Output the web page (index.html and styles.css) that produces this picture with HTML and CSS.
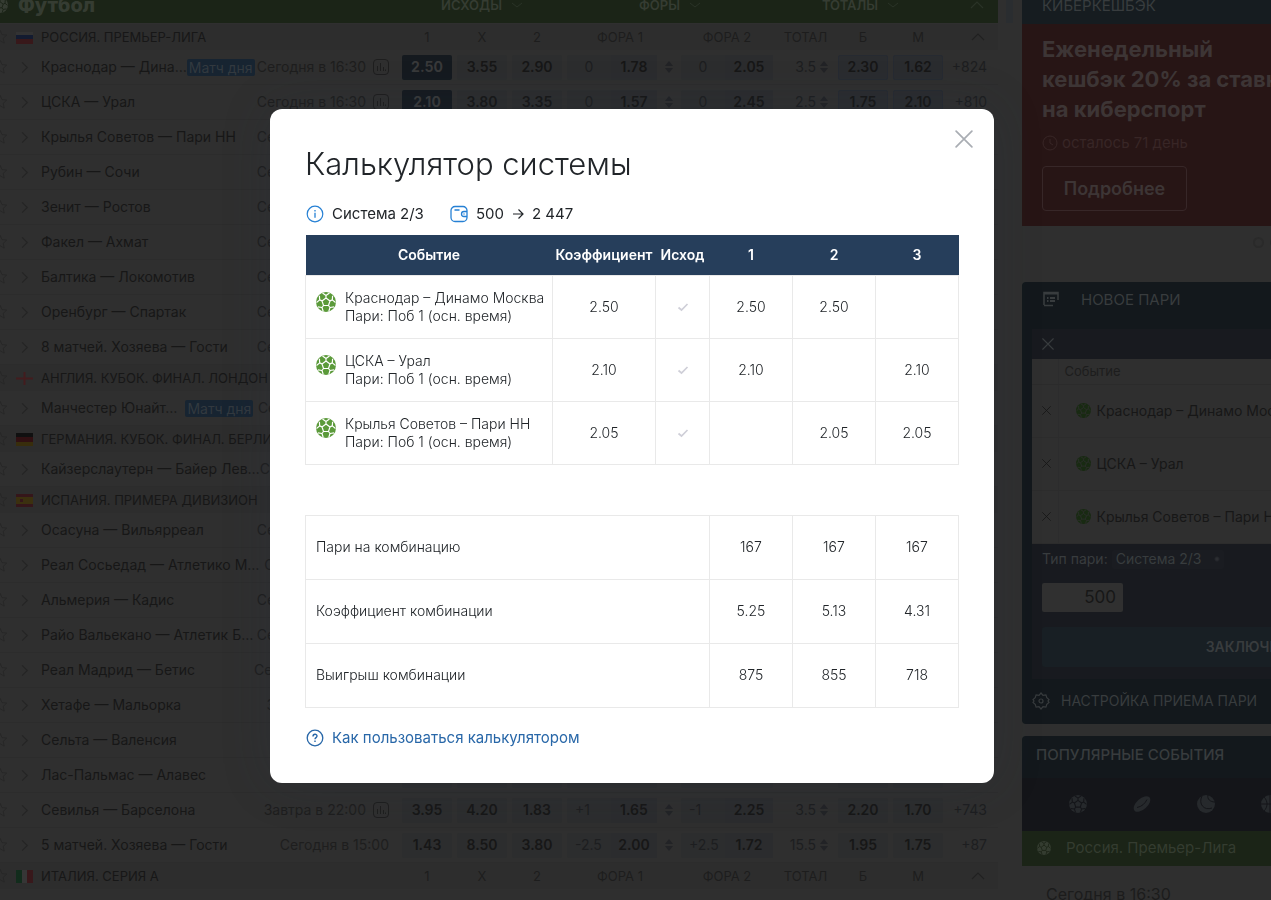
FILE: index.html
```html
<!DOCTYPE html>
<html lang="ru">
<head>
<meta charset="utf-8">
<title>Калькулятор системы</title>
<link rel="stylesheet" href="styles.css">
</head>
<body>
<svg class="sprite" aria-hidden="true">
  <symbol id="star" viewBox="0 0 16 16"><path d="M8 1.2l2 4.4 4.8.5-3.600 3.200 1 4.800L8 11.700 3.800 14.100l1-4.800L1.200 6.100 6 5.600z" fill="none" stroke="currentColor"/></symbol>
  <symbol id="right" viewBox="0 0 16 16"><path d="M5.500 2.500L11 8l-5.500 5.500" fill="none" stroke="currentColor" stroke-width="1.300"/></symbol>
  <symbol id="down" viewBox="0 0 12 12"><path d="M1 4l5 4 5-4" fill="none" stroke="currentColor"/></symbol>
  <symbol id="up" viewBox="0 0 14 12"><path d="M1 9l6-6 6 6" fill="none" stroke="currentColor" stroke-width="1.200"/></symbol>
  <symbol id="sort" viewBox="0 0 8 12"><path d="M0 5l4-5 4 5zM0 7l4 5 4-5z" fill="currentColor"/></symbol>
  <symbol id="stat" viewBox="0 0 16 16"><rect x=".5" y=".5" width="15" height="15" rx="3.500" fill="none" stroke="currentColor"/><path d="M4.500 12V7M7.500 12V4M10.500 12V8M12.500 12v-1.500" stroke="currentColor" fill="none"/></symbol>
  <symbol id="cross" viewBox="0 0 16 16"><path d="M1 1l14 14M15 1L1 15" fill="none" stroke="currentColor" stroke-width="1.500" stroke-linecap="round"/></symbol>
  <symbol id="check" viewBox="0 0 12 10"><path d="M1.500 5.500L4.500 8 10.500 2" fill="none" stroke="currentColor" stroke-width="1.700"/></symbol>
  <symbol id="ball" viewBox="0 0 20 20">
    <circle cx="10" cy="10" r="10" fill="currentColor" stroke="none"/>
    <path fill="none" stroke-width="1.200" d="M10 6l4 2.900-1.500 4.600h-5L6 8.900zM10 6V3.500M14 8.900l2.300-1M12.500 13.500l1.500 2M7.500 13.500l-1.500 2M6 8.900l-2.300-1M10 3.500L6.500 1M10 3.500L13.500 1M16.300 7.900l.3-4.200M16.300 7.900l3.200 2.600M14 15.500l4-.6M14 15.500l-1.200 3.900M6 15.500l-4-.6M6 15.500l1.200 3.900M3.700 7.900l-.3-4.200M3.700 7.900L.5 10.500"/>
  </symbol>
</svg>

<div class="page">
  <main class="board">
    <header class="sport grid">
      <h2 class="sport-name"><svg class="i16"><use href="#ball"/></svg>Футбол</h2>
      <button class="span3">ИСХОДЫ<svg class="i12"><use href="#down"/></svg></button>
      <button class="span3">ФОРЫ<svg class="i12"><use href="#down"/></svg></button>
      <button class="span3">ТОТАЛЫ<svg class="i12"><use href="#down"/></svg></button>
      <button class="end" aria-label="Свернуть"><svg class="i14"><use href="#up"/></svg></button>
    </header>

    <div class="league grid">
      <div class="lead"><svg class="i16 star"><use href="#star"/></svg><svg class="flag" viewBox="0 0 17 13"><rect width="17" height="4" y="1" fill="#333"/><rect width="17" height="4" y="4" fill="#131b30"/><rect width="17" height="5" y="8" fill="#38181a"/></svg><span>РОССИЯ. ПРЕМЬЕР-ЛИГА</span></div>
      <span>1</span><span>X</span><span>2</span><span class="fora">ФОРА 1</span><span></span><span>ФОРА 2</span><span>ТОТАЛ</span><span>Б</span><span>М</span><span class="end"><svg class="i14"><use href="#up"/></svg></span>
    </div>
    <div class="match grid">
      <div class="lead"><svg class="i16 star"><use href="#star"/></svg><svg class="more"><use href="#right"/></svg><a href="#">Краснодар — Дина…</a><span class="tag">Матч дня</span><time>Сегодня в 16:30</time><svg class="i16"><use href="#stat"/></svg></div>
      <button class="odd picked">2.50</button><button class="odd">3.55</button><button class="odd">2.90</button>
      <button class="pair"><i>0</i><b>1.78</b></button><svg class="sort"><use href="#sort"/></svg><button class="pair"><i>0</i><b>2.05</b></button>
      <span class="total">3.5<svg class="sort"><use href="#sort"/></svg></span><button class="odd main">2.30</button><button class="odd main">1.62</button><a class="end" href="#">+824</a>
    </div>
    <div class="match grid">
      <div class="lead"><svg class="i16 star"><use href="#star"/></svg><svg class="more"><use href="#right"/></svg><a href="#">ЦСКА — Урал</a><time>Сегодня в 16:30</time><svg class="i16"><use href="#stat"/></svg></div>
      <button class="odd picked">2.10</button><button class="odd">3.80</button><button class="odd">3.35</button>
      <button class="pair"><i>0</i><b>1.57</b></button><svg class="sort"><use href="#sort"/></svg><button class="pair"><i>0</i><b>2.45</b></button>
      <span class="total">2.5<svg class="sort"><use href="#sort"/></svg></span><button class="odd main">1.75</button><button class="odd main">2.10</button><a class="end" href="#">+810</a>
    </div>
    <div class="match grid"><div class="lead"><svg class="i16 star"><use href="#star"/></svg><svg class="more"><use href="#right"/></svg><a href="#">Крылья Советов — Пари НН</a><time>Сегодня в 16:30</time><svg class="i16"><use href="#stat"/></svg></div></div>
    <div class="match grid"><div class="lead"><svg class="i16 star"><use href="#star"/></svg><svg class="more"><use href="#right"/></svg><a href="#">Рубин — Сочи</a><time>Сегодня в 16:30</time><svg class="i16"><use href="#stat"/></svg></div></div>
    <div class="match grid"><div class="lead"><svg class="i16 star"><use href="#star"/></svg><svg class="more"><use href="#right"/></svg><a href="#">Зенит — Ростов</a><time>Сегодня в 16:30</time><svg class="i16"><use href="#stat"/></svg></div></div>
    <div class="match grid"><div class="lead"><svg class="i16 star"><use href="#star"/></svg><svg class="more"><use href="#right"/></svg><a href="#">Факел — Ахмат</a><time>Сегодня в 16:30</time><svg class="i16"><use href="#stat"/></svg></div></div>
    <div class="match grid"><div class="lead"><svg class="i16 star"><use href="#star"/></svg><svg class="more"><use href="#right"/></svg><a href="#">Балтика — Локомотив</a><time>Сегодня в 16:30</time><svg class="i16"><use href="#stat"/></svg></div></div>
    <div class="match grid"><div class="lead"><svg class="i16 star"><use href="#star"/></svg><svg class="more"><use href="#right"/></svg><a href="#">Оренбург — Спартак</a><time>Сегодня в 16:30</time><svg class="i16"><use href="#stat"/></svg></div></div>
    <div class="match grid"><div class="lead"><svg class="i16 star"><use href="#star"/></svg><svg class="more"><use href="#right"/></svg><a href="#">8 матчей. Хозяева — Гости</a><time>Сегодня в 16:30</time><svg class="i16"><use href="#stat"/></svg></div></div>

    <div class="league grid"><div class="lead"><svg class="i16 star"><use href="#star"/></svg><svg class="flag" viewBox="0 0 17 13"><path d="M0 6.500h17M8.500 0v13" stroke="#431c1e" stroke-width="2"/></svg><span>АНГЛИЯ. КУБОК. ФИНАЛ. ЛОНДОН</span></div></div>
    <div class="match grid"><div class="lead"><svg class="i16 star"><use href="#star"/></svg><svg class="more"><use href="#right"/></svg><a href="#">Манчестер Юнайт…</a><span class="tag spaced">Матч дня</span><time>Сегодня в 17:00</time><svg class="i16"><use href="#stat"/></svg></div></div>
    <div class="league grid"><div class="lead"><svg class="i16 star"><use href="#star"/></svg><svg class="flag" viewBox="0 0 17 13"><rect width="17" height="5" fill="#101010"/><rect y="4" width="17" height="5" fill="#301012"/><rect y="9" width="17" height="4" fill="#382d0c"/></svg><span>ГЕРМАНИЯ. КУБОК. ФИНАЛ. БЕРЛИН</span></div></div>
    <div class="match grid"><div class="lead"><svg class="i16 star"><use href="#star"/></svg><svg class="more"><use href="#right"/></svg><a href="#">Кайзерслаутерн — Байер Лев…</a><time>Сегодня в 21:00</time><svg class="i16"><use href="#stat"/></svg></div></div>
    <div class="league grid"><div class="lead"><svg class="i16 star"><use href="#star"/></svg><svg class="flag" viewBox="0 0 17 13"><rect width="17" height="13" fill="#35161a"/><rect y="3" width="17" height="7" fill="#3b300f"/><rect x="4" y="5" width="3" height="3" fill="#35161a"/></svg><span>ИСПАНИЯ. ПРИМЕРА ДИВИЗИОН</span></div></div>
    <div class="match grid"><div class="lead"><svg class="i16 star"><use href="#star"/></svg><svg class="more"><use href="#right"/></svg><a href="#">Осасуна — Вильярреал</a><time>Сегодня в 15:00</time><svg class="i16"><use href="#stat"/></svg></div></div>
    <div class="match grid"><div class="lead"><svg class="i16 star"><use href="#star"/></svg><svg class="more"><use href="#right"/></svg><a href="#">Реал Сосьедад — Атлетико М…</a><time>Сегодня в 17:11</time><svg class="i16"><use href="#stat"/></svg></div></div>
    <div class="match grid"><div class="lead"><svg class="i16 star"><use href="#star"/></svg><svg class="more"><use href="#right"/></svg><a href="#">Альмерия — Кадис</a><time>Сегодня в 16:30</time><svg class="i16"><use href="#stat"/></svg></div></div>
    <div class="match grid"><div class="lead"><svg class="i16 star"><use href="#star"/></svg><svg class="more"><use href="#right"/></svg><a href="#">Райо Вальекано — Атлетик Б…</a><time>Сегодня в 16:30</time><svg class="i16"><use href="#stat"/></svg></div></div>
    <div class="match grid"><div class="lead"><svg class="i16 star"><use href="#star"/></svg><svg class="more"><use href="#right"/></svg><a href="#">Реал Мадрид — Бетис</a><time>Сегодня в 22:00</time><svg class="i16"><use href="#stat"/></svg></div></div>
    <div class="match grid"><div class="lead"><svg class="i16 star"><use href="#star"/></svg><svg class="more"><use href="#right"/></svg><a href="#">Хетафе — Мальорка</a><time>Завтра в 15:00</time><svg class="i16"><use href="#stat"/></svg></div></div>
    <div class="match grid"><div class="lead"><svg class="i16 star"><use href="#star"/></svg><svg class="more"><use href="#right"/></svg><a href="#">Сельта — Валенсия</a></div></div>
    <div class="match grid"><div class="lead"><svg class="i16 star"><use href="#star"/></svg><svg class="more"><use href="#right"/></svg><a href="#">Лас-Пальмас — Алавес</a></div>
      <span class="odd"></span><span class="odd"></span><span class="odd"></span><span class="pair"></span><span></span><span class="pair"></span><span></span><span class="odd"></span><span class="odd"></span>
    </div>
    <div class="match grid">
      <div class="lead"><svg class="i16 star"><use href="#star"/></svg><svg class="more"><use href="#right"/></svg><a href="#">Севилья — Барселона</a><time>Завтра в 22:00</time><svg class="i16"><use href="#stat"/></svg></div>
      <button class="odd">3.95</button><button class="odd">4.20</button><button class="odd">1.83</button>
      <button class="pair signed"><i>+1</i><b>1.65</b></button><svg class="sort"><use href="#sort"/></svg><button class="pair signed"><i>-1</i><b>2.25</b></button>
      <span class="total">3.5<svg class="sort"><use href="#sort"/></svg></span><button class="odd">2.20</button><button class="odd">1.70</button><a class="end" href="#">+743</a>
    </div>
    <div class="match grid">
      <div class="lead"><svg class="i16 star"><use href="#star"/></svg><svg class="more"><use href="#right"/></svg><a href="#">5 матчей. Хозяева — Гости</a><time>Сегодня в 15:00</time></div>
      <button class="odd">1.43</button><button class="odd">8.50</button><button class="odd">3.80</button>
      <button class="pair signed"><i>-2.5</i><b>2.00</b></button><svg class="sort"><use href="#sort"/></svg><button class="pair signed"><i>+2.5</i><b>1.72</b></button>
      <span class="total">15.5<svg class="sort"><use href="#sort"/></svg></span><button class="odd">1.95</button><button class="odd">1.75</button><a class="end" href="#">+87</a>
    </div>
    <div class="league grid">
      <div class="lead"><svg class="i16 star"><use href="#star"/></svg><svg class="flag" viewBox="0 0 17 13"><rect width="6" height="13" fill="#122c1c"/><rect x="6" width="5" height="13" fill="#363636"/><rect x="11" width="6" height="13" fill="#38181b"/></svg><span>ИТАЛИЯ. СЕРИЯ А</span></div>
      <span>1</span><span>X</span><span>2</span><span class="fora">ФОРА 1</span><span></span><span>ФОРА 2</span><span>ТОТАЛ</span><span>Б</span><span>М</span><span class="end"><svg class="i14"><use href="#up"/></svg></span>
    </div>
  </main>
  <div class="scroller"></div>

  <aside class="side">
    <section class="promo">
      <h3>КИБЕРКЕШБЭК</h3>
      <div class="promo-body">
        <p class="promo-title">Еженедельный<br>кешбэк 20% за ставки<br>на киберспорт</p>
        <p class="left"><svg class="i16" viewBox="0 0 16 16"><circle cx="8" cy="8" r="7" fill="none" stroke="currentColor"/><path d="M8 4v4l3 2" fill="none" stroke="currentColor"/></svg>осталось 71 день</p>
        <button>Подробнее</button>
      </div>
      <div class="dots"><i></i><i></i></div>
    </section>

    <section class="slip">
      <h3><svg class="i16" viewBox="0 0 16 16"><path d="M1 14V1.500h14V9M1 14.500h9" fill="none" stroke="currentColor" stroke-width="1.600"/><path d="M1 2.500h14M4 7h1.500M7 7h5M4 10h1.500M7 10h5" stroke="currentColor" stroke-width="1.800"/></svg>НОВОЕ ПАРИ</h3>
      <div class="slip-body">
        <div class="slip-top"><svg class="i12"><use href="#cross"/></svg></div>
        <table class="slip-table">
          <tr><th></th><th>Событие</th></tr>
          <tr><td><svg class="i8"><use href="#cross"/></svg></td><td><span><svg class="i16"><use href="#ball"/></svg>Краснодар – Динамо Москва</span></td></tr>
          <tr><td><svg class="i8"><use href="#cross"/></svg></td><td><span><svg class="i16"><use href="#ball"/></svg>ЦСКА – Урал</span></td></tr>
          <tr><td><svg class="i8"><use href="#cross"/></svg></td><td><span><svg class="i16"><use href="#ball"/></svg>Крылья Советов – Пари НН</span></td></tr>
        </table>
        <div class="slip-form">
          <div class="kind"><label for="kind">Тип пари:</label><select id="kind"><option>Система 2/3</option></select></div>
          <input type="text" value="500" aria-label="Сумма пари">
          <button>ЗАКЛЮЧИТЬ ПАРИ</button>
        </div>
      </div>
      <div class="slip-foot"><svg class="i18" viewBox="0 0 18 18"><path d="M9 1l2 2.300 2.900-.4.900 2.800L17 7.500 16 9l1 1.500-2.200 1.800-.9 2.800-2.900-.4L9 17l-2-2.300-2.900.4-.9-2.800L1 10.500 2 9 1 7.500l2.200-1.800.9-2.800 2.900.4z" fill="none" stroke="currentColor" stroke-width="1.200"/><circle cx="9" cy="9" r="2" fill="none" stroke="currentColor" stroke-width="1.200"/></svg>НАСТРОЙКА ПРИЕМА ПАРИ</div>
    </section>

    <section class="popular">
      <h3>ПОПУЛЯРНЫЕ СОБЫТИЯ</h3>
      <div class="sports">
        <svg class="i18"><use href="#ball"/></svg>
        <svg class="i18" viewBox="0 0 18 18"><ellipse cx="9" cy="9" rx="10" ry="5.500" transform="rotate(-42 9 9)" fill="currentColor" stroke="none"/><path d="M4 12.500c5-1 8-4 10-8" fill="none"/></svg>
        <svg class="i18" viewBox="0 0 18 18"><circle cx="9" cy="9" r="9" fill="currentColor" stroke="none"/><path d="M5 1C1 9 7 16 15 13M11 0c-1 4 2 7 7 7" fill="none"/></svg>
        <svg class="i18" viewBox="0 0 18 18"><circle cx="9" cy="9" r="9" fill="currentColor" stroke="none"/><path d="M0 9h18M9 0v18M3 2c4 4 4 10 0 14M15 2c-4 4-4 10 0 14" fill="none"/></svg>
      </div>
      <div class="popular-league"><svg class="i14"><use href="#ball"/></svg>Россия. Премьер-Лига</div>
      <time>Сегодня в 16:30</time>
    </section>
  </aside>
</div>

<div class="overlay">
  <section class="modal" role="dialog" aria-labelledby="title">
    <button class="close" aria-label="Закрыть"><svg class="i18"><use href="#cross"/></svg></button>
    <h1 id="title">Калькулятор системы</h1>
    <div class="meta">
      <span><svg class="i18 blue" viewBox="0 0 18 18"><circle cx="9" cy="9" r="7.800" fill="none" stroke="currentColor" stroke-width="1.200"/><path d="M9 7.800v5M9 5v1.400" stroke="currentColor" stroke-width="1.300"/></svg>Система 2/3</span>
      <span><svg class="i18 blue" viewBox="0 0 18 18"><path d="M17 6.500V5.500a4 4 0 0 0-4-4H5a4 4 0 0 0-4 4v7a4 4 0 0 0 4 4h8a4 4 0 0 0 4-4v-1M17 6.500h-3a2.500 2.500 0 0 0 0 5h3zM4.500 5h5M13.500 9h1" fill="none" stroke="currentColor" stroke-width="1.300"/></svg>500<svg class="i12" viewBox="0 0 12 12"><path d="M1 6h10M6.500 1.500L11 6l-4.500 4.500" fill="none" stroke="currentColor" stroke-width="1.200"/></svg>2 447</span>
    </div>
    <table class="calc">
      <colgroup><col><col class="c-odd"><col class="c-result"><col class="c-num"><col class="c-num"><col class="c-num"></colgroup>
      <thead><tr><th>Событие</th><th>Коэффициент</th><th>Исход</th><th>1</th><th>2</th><th>3</th></tr></thead>
      <tbody>
        <tr><td><div class="event"><svg class="i20"><use href="#ball"/></svg><div>Краснодар – Динамо Москва<br>Пари: Поб 1 (осн. время)</div></div></td><td>2.50</td><td><svg class="i12"><use href="#check"/></svg></td><td>2.50</td><td>2.50</td><td></td></tr>
        <tr><td><div class="event"><svg class="i20"><use href="#ball"/></svg><div>ЦСКА – Урал<br>Пари: Поб 1 (осн. время)</div></div></td><td>2.10</td><td><svg class="i12"><use href="#check"/></svg></td><td>2.10</td><td></td><td>2.10</td></tr>
        <tr><td><div class="event"><svg class="i20"><use href="#ball"/></svg><div>Крылья Советов – Пари НН<br>Пари: Поб 1 (осн. время)</div></div></td><td>2.05</td><td><svg class="i12"><use href="#check"/></svg></td><td></td><td>2.05</td><td>2.05</td></tr>
      </tbody>
    </table>
    <table class="calc sums">
      <colgroup><col><col class="c-num"><col class="c-num"><col class="c-num"></colgroup>
      <tbody>
        <tr><th scope="row">Пари на комбинацию</th><td>167</td><td>167</td><td>167</td></tr>
        <tr><th scope="row">Коэффициент комбинации</th><td>5.25</td><td>5.13</td><td>4.31</td></tr>
        <tr><th scope="row">Выигрыш комбинации</th><td>875</td><td>855</td><td>718</td></tr>
      </tbody>
    </table>
    <a class="help" href="#"><svg class="i18" viewBox="0 0 18 18"><circle cx="9" cy="9" r="7.800" fill="none" stroke="currentColor" stroke-width="1.300"/><path d="M7 7.500C7 4.600 11 4.600 11 7.100c0 1.500-2 1.500-2 3.200M9 11.600v1.400" fill="none" stroke="currentColor" stroke-width="1.400"/></svg>Как пользоваться калькулятором</a>
  </section>
</div>
</body>
</html>
```
FILE: styles.css
```css
* { box-sizing: border-box; }
body {
  margin: 0;
  height: 100vh;
  overflow: hidden;
  background: #2f2f2f;
  color: #171717;
  font: 14px/18px Inter, "Liberation Sans", sans-serif;
}
h1, h2, h3, p { margin: 0; font-weight: 400; }
button, select, input { font: inherit; color: inherit; border: 0; background: none; padding: 0; margin: 0; }
a { color: inherit; text-decoration: none; }
svg { display: block; flex: none; }
i, b { font-style: normal; }
.sprite { display: none; }
.i8 { width: 9px; height: 9px; }
.i12 { width: 12px; height: 12px; }
.i14 { width: 14px; height: 14px; }
.i16 { width: 16px; height: 16px; }
.i18 { width: 18px; height: 18px; }
.i20 { width: 20px; height: 20px; }

.page { display: flex; height: 100vh; overflow: hidden; white-space: nowrap; }

/* events board */
.board { flex: 1 1 0; min-width: 0; margin-top: -14px; }
.grid {
  display: grid;
  grid-template-columns: minmax(0, 1fr) 50px 50px 50px 90px 14px 92px 55px 50px 50px 39px;
  column-gap: 5px;
  align-items: center;
  padding-right: 11px;
}
.sport { height: 37px; margin-bottom: 1px; background: #1b2417; color: #353c32; }
.sport button { display: flex; align-items: center; justify-content: center; gap: 9px; font-size: 13px; font-weight: 600; }
.sport button svg { color: #2a3327; }
.sport-name { display: flex; align-items: center; gap: 10px; margin-left: -8px; font-size: 20px; font-weight: 800; stroke: #1b2417; }
.span3 { grid-column: span 3; }
.league { height: 26px; background: #2d2d2d; font-size: 13px; text-align: center; }
.league > span { color: #1d1d1d; }
.league > .fora { padding-left: 16px; }
.league > .end { display: flex; justify-content: center; padding-left: 20px; color: #212121; }
.sport > .end { justify-content: flex-end; padding-right: 3px; }
.match { height: 35px; border-bottom: 1px solid #2c2c2c; }
.lead { display: flex; align-items: center; padding-right: 8px; color: #171717; }
.star { margin-left: -8px; margin-right: 8px; color: #272727; }
.flag { width: 17px; height: 13px; margin-right: 8px; }
.more { width: 17px; height: 15px; margin-right: 8px; color: #252525; }
.tag { padding: 0 2px; border-radius: 2px; background: #172431; color: #32393f; line-height: 17px; }
.tag.spaced { margin-left: 8px; }
.lead time { margin-left: auto; color: #1e1e1e; }
.lead time + svg { margin-left: 7px; color: #1e1e1e; }
.odd, .pair { height: 25px; border-radius: 2px; background: #2c2d2e; text-align: center; }
.odd { font-weight: 600; }
.odd.picked { background: #151a1f; color: #38393a; font-weight: 700; }
.odd.main { border: 1px solid #262a31; background: #2a2c2f; }
.pair { display: grid; grid-template-columns: 44px 1fr; align-items: stretch; line-height: 24px; }
.pair b { height: 25px; font-weight: 600; background: #2b2c2e; }
.pair i { color: #1d1e20; }
.pair.signed i { padding-left: 8px; text-align: left; }
.sort { width: 8px; height: 12px; margin: 0 auto; color: #222326; }
.total { display: flex; align-items: center; justify-content: flex-end; gap: 4px; padding-right: 5px; color: #1d1e20; }
.total .sort { margin: 0; }
.match > .end { text-align: right; color: #1d1e20; }
.scroller { flex: none; width: 7px; height: 23px; margin: 0 9px 0 8px; background: #2a2d30; }

/* side column runs past the right edge of the window */
.side { flex: 0 0 480px; margin-right: -231px; color: #383c3e; }
.promo h3 { height: 24px; padding-left: 20px; background: #161c20; font-size: 15px; line-height: 12px; }
.promo-body { height: 202px; padding: 10px 20px 15px; background: #271515; color: #3d3535; }
.promo-title { font-size: 22px; font-weight: 700; line-height: 30px; }
.left { display: flex; align-items: center; gap: 4px; margin: 10px 0 14px; font-size: 15px; color: #382626; }
.promo button { width: 145px; height: 45px; border: 1px solid #372728; border-radius: 4px; font-size: 18px; font-weight: 600; }
.dots { display: flex; gap: 6px; height: 56px; padding: 11px 0 0 231px; }
.dots i { width: 11px; height: 11px; border: 2px solid #2a2a2a; border-radius: 50%; }
.slip { padding: 0 10px; border-radius: 4px; background: #13181c; }
.slip h3 { display: flex; align-items: flex-start; gap: 22px; height: 47px; padding: 9px 0 0 11px; font-size: 15px; }
.slip-body { background: #181a1f; }
.slip-top { height: 30px; padding: 9px 10px; }
.slip-table { width: 100%; border-collapse: collapse; background: #2f2f2f; color: #171717; }
.slip-table th { height: 25px; padding: 0 0 0 6px; border-bottom: 1px solid #2b2b2b; color: #1d1d1d; font-weight: 400; font-size: 13px; text-align: left; }
.slip-table td { height: 53px; padding: 0; border-bottom: 1px solid #2c2c2c; }
.slip-table tr :first-child:is(th, td) { width: 26px; padding: 0 0 0 10px; border-right: 1px solid #2c2c2d; color: #171717; }
.slip-table span { display: flex; align-items: center; gap: 6px; padding-left: 17px; stroke: #2b2e2a; }
.slip-table span svg { width: 15px; height: 15px; color: #182a12; }
.slip-form { padding: 6px 10px 12px; }
.kind { display: flex; align-items: center; gap: 4px; margin-bottom: 14px; }
.kind select { width: 112px; height: 19px; padding-left: 4px; appearance: none; border-radius: 2px; background: #1a1c21 radial-gradient(circle at 105px 9px, #2c2e32 1px, transparent 3px); }
.slip-form input { display: block; width: 81px; height: 29px; padding-right: 7px; border-radius: 2px; background: #303030; color: #171717; font-size: 17px; text-align: right; }
.slip-form button { width: 100%; height: 40px; margin-top: 15px; padding-left: 24px; border-radius: 3px; background: #181f24; font-weight: 600; }
.slip-foot { display: flex; align-items: center; gap: 11px; height: 45px; font-size: 14px; }
.popular { margin-top: 12px; border-radius: 4px; overflow: hidden; }
.popular h3 { height: 42px; padding: 10px 14px; background: #13181c; font-size: 15px; font-weight: 500; }
.sports { display: flex; align-items: center; gap: 46px; height: 53px; padding-left: 47px; background: #141519; color: #26292c; stroke: #141519; }
.popular-league { display: flex; align-items: center; gap: 15px; height: 35px; padding-left: 15px; background: #1b2417; font-size: 15px; color: #343c30; stroke: #1b2417; }
.popular time { display: block; padding: 19px 24px; font-size: 16px; color: #1c1c1c; }

/* calculator dialog */
.overlay { position: fixed; inset: 0; display: flex; align-items: flex-start; justify-content: center; padding: 109px 7px 0 0; }
.modal { position: relative; width: 724px; padding: 37px 35px 36px; border-radius: 12px; background: #fff; color: #212529; box-shadow: 0 0 50px rgba(38, 50, 72, .2); }
.close { position: absolute; top: 21px; right: 21px; color: #a9adb3; }
.modal h1 { font-size: 31px; font-weight: 300; line-height: 36px; }
.meta { display: flex; gap: 25px; margin: 23px 0 12px; font-size: 15px; }
.meta span { display: flex; align-items: center; gap: 8px; padding-left: 1px; }
.blue { color: #2680d4; }
.calc { width: 100%; table-layout: fixed; border-collapse: collapse; font-weight: 300; white-space: nowrap; }
.calc thead th { height: 40px; padding: 0; background: #263e5b; color: #fff; font-weight: 600; }
.calc td, .sums th { height: 63px; padding: 0; border: 1px solid #e9e9e9; text-align: center; }
.calc .event { text-align: left; }
.c-odd { width: 103px; }
.c-result { width: 54px; }
.c-num { width: 83px; }
.event { display: flex; gap: 9px; padding-left: 10px; }
.event svg { margin-top: 3px; color: #5b9a3a; stroke: #fff; }
.calc td > svg { margin: 0 auto; color: #cfcfd8; }
.sums { margin-top: 50px; }
.sums th { height: 64px; padding-left: 10px; font-weight: 300; text-align: left; }
.help { display: flex; align-items: center; gap: 8px; margin-top: 21px; padding-left: 1px; font-size: 15px; color: #2867a8; }
```
